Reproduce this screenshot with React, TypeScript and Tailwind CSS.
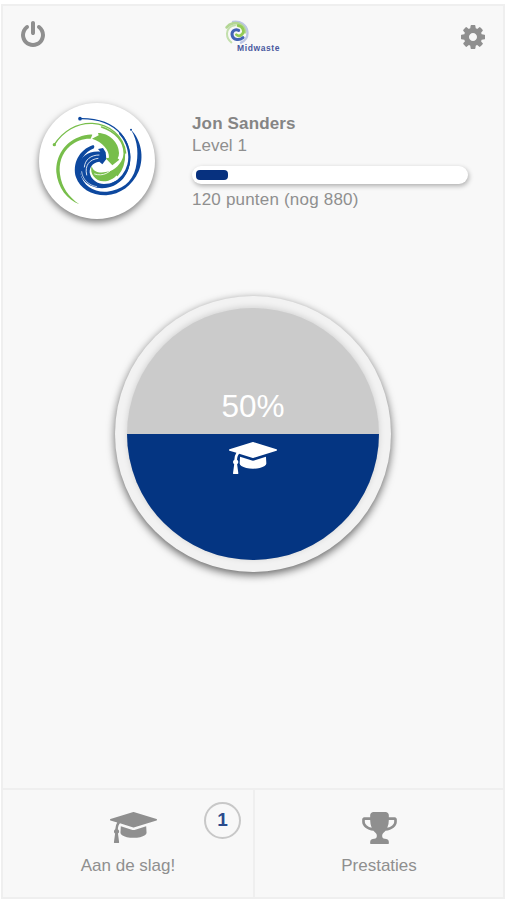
import type { ReactNode } from "react";

type IconProps = {
  className?: string;
};

const user = {
  name: "Jon Sanders",
  level: 1,
  points: 120,
  pointsPerLevel: 1000,
  progress: 50
};

function PowerIcon({ className }: IconProps) {
  return (
    <svg className={className} viewBox="0 0 1792 1792" fill="currentColor">
      <path d="M1664 896q0 156-61 298t-164 245-245 164-298 61-298-61-245-164-164-245-61-298q0-182 80.5-343t226.5-270q43-32 95.5-25t83.5 50q32 42 24.5 94.5t-49.5 84.5q-98 74-151.5 181t-53.5 228q0 104 40.5 198.5t109.5 163.5 163.5 109.5 198.5 40.5 198.5-40.5 163.5-109.5 109.5-163.5 40.5-198.5q0-121-53.5-228t-151.5-181q-42-32-49.5-84.5t24.5-94.5q31-43 84-50t95 25q146 109 226.5 270t80.5 343zm-640-768v640q0 52-38 90t-90 38-90-38-38-90v-640q0-52 38-90t90-38 90 38 38 90z" />
    </svg>
  );
}

function CogIcon({ className }: IconProps) {
  return (
    <svg className={className} viewBox="0 0 1792 1792" fill="currentColor">
      <path d="M1152 896q0-106-75-181t-181-75-181 75-75 181 75 181 181 75 181-75 75-181zm512-109v222q0 12-8 23t-20 13l-185 28q-19 54-39 91 35 50 107 138 10 12 10 25t-9 23q-27 37-99 108t-94 71q-12 0-26-9l-138-108q-44 23-91 38-16 136-29 186-7 28-36 28h-222q-14 0-24.5-8.5t-11.5-21.5l-28-184q-49-16-90-37l-141 107q-10 9-25 9-14 0-25-11-126-114-165-168-7-10-7-23 0-12 8-23 15-21 51-66.5t54-70.5q-27-50-41-99l-183-27q-13-2-21-12.5t-8-23.5v-222q0-12 8-23t19-13l186-28q14-46 39-92-40-57-107-138-10-12-10-24 0-10 9-23 26-36 98.5-107.5t94.5-71.5q13 0 26 10l138 107q44-23 91-38 16-136 29-186 7-28 36-28h222q14 0 24.5 8.5t11.5 21.5l28 184q49 16 90 37l142-107q9-9 24-9 13 0 25 10 129 119 165 170 7 8 7 22 0 12-8 23-15 21-51 66.5t-54 70.5q26 50 41 98l183 28q13 2 21 12.5t8 23.5z" />
    </svg>
  );
}

function GraduationCapIcon({ className }: IconProps) {
  return (
    <svg className={className} viewBox="0 128 2304 1536" fill="currentColor" preserveAspectRatio="none">
      <path d="M1774 836l18 316q4 69-82 128t-235 93.5-323 34.5-323-34.5-235-93.5-82-128l18-316 574 181q22 7 48 7t48-7zm530-324q0 23-22 31l-1120 352q-4 1-10 1t-10-1l-652-206q-43 34-71 111.5t-34 178.5q63 36 63 109 0 69-58 107l58 433q2 14-8 25-9 11-24 11h-192q-15 0-24-11-10-11-8-25l58-433q-58-38-58-107 0-73 65-111 11-207 98-330l-333-104q-22-8-22-31t22-31l1120-352q4-1 10-1t10 1l1120 352q22 8 22 31z" />
    </svg>
  );
}

function TrophyIcon({ className }: IconProps) {
  return (
    <svg className={className} viewBox="64 128 1664 1536" fill="currentColor">
      <path d="M522 883q-74-162-74-371h-256v96q0 78 94.5 162t235.5 113zm1078-275v-96h-256q0 209-74 371 141-29 235.5-113t94.5-162zm128-128v128q0 71-41.5 143t-112 130-173 97.5-215.5 44.5q-42 54-95 95-38 34-52.5 72.5t-14.5 89.5q0 54 30.5 91t97.5 37q75 0 133.5 45.5t58.5 114.5v64q0 14-9 23t-23 9h-832q-14 0-23-9t-9-23v-64q0-69 58.5-114.5t133.5-45.5q67 0 97.5-37t30.5-91q0-51-14.5-89.5t-52.5-72.5q-53-41-95-95-113-5-215.5-44.5t-173-97.5-112-130-41.5-143v-128q0-40 28-68t68-28h288v-96q0-66 47-113t113-47h576q66 0 113 47t47 113v96h288q40 0 68 28t28 68z" />
    </svg>
  );
}

function Swirl({ className }: IconProps) {
  return (
    <svg className={className} viewBox="27 24 348 348">
      <g fill="#0d489f">
        <circle cx="150" cy="71" r="5.5" />
        <circle cx="303" cy="104" r="3" />
        <path d="M303 104C333 134 344 186 326 229C307 273 270 298 229 301C185 302 150 281 138 247C126 208 146 164 190 150Q195 153 192 160C162 172 147 195 151 235C159 275 194 293 231 290C274 286 307 262 317 220C326 180 325 140 303 104Z" />
        <path d="M229 192L217 208L208 200C187 202 174 221 181 240C187 256 202 266 222 267C267 267 296 232 299 184C306 235 267 280 216 280C174 279 146 250 148 214C150 184 176 167 211 170L204 162L219 159L227 172Z" />
      </g>
      <g fill="#78be4b">
        <path d="M148 328C112 315 83 278 79 232C77 182 105 143 146 127C160 121 175 118 187 119L182 131C160 130 139 138 121 152C94 175 86 206 90 238C95 277 116 306 148 328Z" />
        <path d="M186 131L206 121L204 114C237 114 267 142 267 174Q267 184 263 190L268 194L247 211L227 190L237 188C238 165 218 141 186 131Z" />
        <path d="M185 212C190 235 215 235 239 229C263 219 279 198 283 170C288 215 260 258 221 259C195 258 178 235 185 212Z" />
        <circle cx="73" cy="149" r="5" />
      </g>
      <g fill="none" stroke="#78be4b" strokeLinecap="round">
        <path d="M73 149C98 109 141 83 187 85C237 87 281 123 287 174" strokeWidth="4" />
        <path d="M215 96C257 110 283 140 283 176C284 207 274 226 262 241" strokeWidth="5" />
      </g>
      <g fill="none" stroke="#0d489f" strokeLinecap="round">
        <path d="M150 71C203 70 244 84 272 116C296 144 304 180 297 209C287 249 255 275 214 276" strokeWidth="4" />
        <path d="M270 116C294 143 303 178 295 209C288 235 271 255 247 267" strokeWidth="6" />
      </g>
      <g fill="none" stroke="#ffffff" strokeLinecap="round">
        <path d="M163 216C165 194 182 180 207 180" strokeWidth="2.5" />
        <path d="M170 240C163 210 179 193 204 190" strokeWidth="2.5" />
        <path d="M155 230C157 253 176 271 200 275" strokeWidth="2" />
        <path d="M194 237C217 245 242 235 257 207" strokeWidth="2.5" />
      </g>
    </svg>
  );
}

// Simplified swirl that stays readable at header size
function SwirlSmall({ className }: IconProps) {
  return (
    <svg className={className} viewBox="0 0 75 75" fill="none" strokeLinecap="round">
      <path d="M24 6C46 2 64 15 67 34C69 49 61 62 48 68" stroke="#bcc6e4" strokeWidth="7" />
      <path d="M5 22C15 9 32 6 46 13C55 18 60 26 60 37" stroke="#b3d694" strokeWidth="8" />
      <path d="M30 16C16 18 7 28 6 41C6 53 11 61 19 67" stroke="#c3dfac" strokeWidth="6" />
      <path d="M39 17C54 19 59 34 52 42C46 49 39 49 34 44" stroke="#93cb55" strokeWidth="8" />
      <path d="M41 31C28 25 18 36 22 48C26 60 43 62 54 53" stroke="#4263b4" strokeWidth="9" />
    </svg>
  );
}

function TabButton({ icon, label, badge }: { icon: ReactNode; label: string; badge?: number }) {
  return (
    <button className="relative flex h-full w-full flex-col items-center pt-[22px] text-[#8f8f8f]" type="button">
      {icon}
      <span className="text-[17px] leading-5">{label}</span>
      {badge ? (
        <span className="absolute top-[12px] right-[12px] flex h-[37px] w-[37px] items-center justify-center rounded-full border-2 border-[#c8c8c8] text-[19px] font-bold text-[#2a4b8d]">
          {badge}
        </span>
      ) : null}
    </button>
  );
}

export default function App() {
  const remaining = user.pointsPerLevel - user.points;

  return (
    <div className="h-[900px] w-[506px] bg-white px-px pt-[4px] pb-px font-['Liberation_Sans',Arial,sans-serif]">
      <main className="flex h-full flex-col border-2 border-[#efefef] bg-[#f8f8f8] text-[#8f8f8f]">
        <header className="flex h-[64px] items-start justify-between px-[16px]">
          <button className="mt-[15px]" type="button" aria-label="Uitloggen">
            <PowerIcon className="h-[28px] w-[28px]" />
          </button>
          <div className="ml-[4px] flex h-[48px] w-[60px] items-start pt-[14px]">
            <SwirlSmall className="h-[25px] w-[25px] shrink-0" />
            <span className="mt-[23px] -ml-[13px] text-[8.5px] leading-[10px] font-bold tracking-[0.6px] text-[#49599f]">
              Midwaste
            </span>
          </div>
          <button className="mt-[17px]" type="button" aria-label="Instellingen">
            <CogIcon className="h-[28px] w-[28px]" />
          </button>
        </header>

        <section className="flex h-[220px] items-start pt-[33px] pl-[36px]">
          <div className="h-[116px] w-[116px] shrink-0 rounded-full bg-white shadow-[0_3px_7px_rgba(0,0,0,0.5)]">
            <Swirl className="h-full w-full" />
          </div>
          <div className="mt-[10px] ml-[37px] w-[276px]">
            <h1 className="text-[17px] leading-[22px] font-bold tracking-[0.15px] text-[#858585]">{user.name}</h1>
            <p className="text-[17px] leading-[22px]">Level {user.level}</p>
            <div className="mt-[9px] h-[18px] rounded-full bg-white p-[4px] shadow-[1px_2px_5px_rgba(0,0,0,0.3)]">
              <div
                className="h-[10px] rounded-[4px] bg-[#07317f]"
                style={{ width: `${(user.points / user.pointsPerLevel) * 100}%` }}
              />
            </div>
            <p className="mt-[5px] text-[17px] leading-[22px] tracking-[0.2px]">
              {user.points} punten (nog {remaining})
            </p>
          </div>
        </section>

        <section className="flex flex-1 justify-center pt-[6px]">
          <div className="h-[276px] w-[276px] rounded-full bg-[#f2f2f2] p-[12px] shadow-[0_3px_8px_rgba(0,0,0,0.6)]">
            <div className="relative flex h-[252px] flex-col items-center rounded-full bg-[#cbcbcb] text-white shadow-[0_-1px_6px_rgba(0,0,0,0.14)]">
              <div className="absolute inset-0 overflow-hidden rounded-full">
                <div className="absolute inset-x-0 bottom-0 bg-[#043582]" style={{ height: `${user.progress}%` }} />
              </div>
              <span className="relative mt-[79px] text-[31.5px] leading-[38px]">{user.progress}%</span>
              <GraduationCapIcon className="relative mt-[17px] h-[32px] w-[48px]" />
            </div>
          </div>
        </section>

        <nav className="grid h-[109px] grid-cols-[250px_2px_1fr] border-t-2 border-[#efefef]">
          <TabButton
            icon={<GraduationCapIcon className="mb-[13px] ml-[10px] h-[31px] w-[47px]" />}
            label="Aan de slag!"
            badge={1}
          />
          <div className="bg-[#efefef]" />
          <TabButton icon={<TrophyIcon className="mb-[12px] h-[32px] w-[35px]" />} label="Prestaties" />
        </nav>
      </main>
    </div>
  );
}
